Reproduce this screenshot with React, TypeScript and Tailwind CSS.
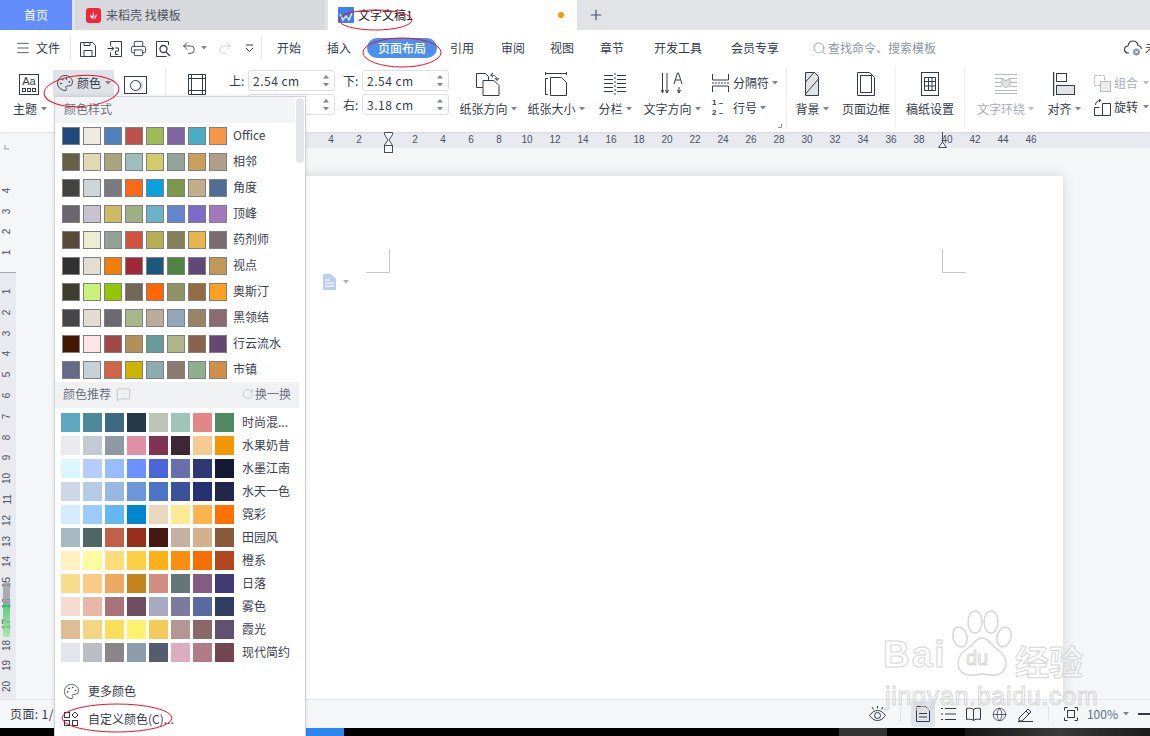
import { Printer, Undo2, Redo2, Palette, Globe, Plus, Search, Menu, RotateCw, MessageSquareMore } from "lucide-react";

const INK = "#343b48";

const styleRows = [
  { name: "Office", colors: ["#1f497d", "#eeece1", "#4f81bd", "#c0504d", "#9bbb59", "#8064a2", "#4bacc6", "#f79646"] },
  { name: "相邻", colors: ["#695f47", "#dfdab4", "#a9a57c", "#9cbebd", "#d2cb6c", "#95a39d", "#c89f5d", "#b1a089"] },
  { name: "角度", colors: ["#434342", "#ced6d9", "#797b7e", "#f96a1b", "#08a1d9", "#7c984a", "#c2ad8d", "#506e94"] },
  { name: "顶峰", colors: ["#69676d", "#c9c2d1", "#ceb966", "#9cb084", "#6bb1c9", "#6585cf", "#7e6bc9", "#a379bb"] },
  { name: "药剂师", colors: ["#564b3c", "#ecedd1", "#93a299", "#cf543f", "#b5ae53", "#848058", "#e8b54d", "#786c71"] },
  { name: "视点", colors: ["#323232", "#e3ded1", "#f07f09", "#9f2936", "#1b587c", "#4e8542", "#604878", "#c19859"] },
  { name: "奥斯汀", colors: ["#3e3d2d", "#caf278", "#94c600", "#71685a", "#ff6700", "#909465", "#956b43", "#fea022"] },
  { name: "黑领结", colors: ["#46464a", "#e3dcd0", "#6a6a70", "#a8b78a", "#bcab98", "#92a7b9", "#9b8466", "#8c6a73"] },
  { name: "行云流水", colors: ["#421800", "#ffe5e5", "#a24747", "#b29158", "#689b9a", "#b0b78a", "#8c6149", "#66476f"] },
  { name: "市镇", colors: ["#646b86", "#c5d1d7", "#d16349", "#ccb400", "#8cadae", "#8c7b70", "#8fb08c", "#d19049"] },
];

const recommendRows = [
  { name: "时尚混...", colors: ["#5ea9c2", "#4e889c", "#3d6983", "#22394a", "#bcc5b6", "#9fc4b8", "#e28786", "#508864"] },
  { name: "水果奶昔", colors: ["#e8eaed", "#c3cad1", "#8f99a4", "#df90a5", "#803353", "#3c2835", "#f6cb93", "#f39800"] },
  { name: "水墨江南", colors: ["#dcf7ff", "#b7cdff", "#97bcff", "#6c92ff", "#4a66d8", "#6870ac", "#2e3871", "#141a35"] },
  { name: "水天一色", colors: ["#cdd7e6", "#b5cbe3", "#96b8e1", "#6b97d8", "#4c75c3", "#3c519c", "#253072", "#1f274a"] },
  { name: "霓彩", colors: ["#d5ebff", "#9ccbfa", "#65b7f1", "#0085d0", "#e9d9bc", "#fee995", "#feb34f", "#ff7200"] },
  { name: "田园风", colors: ["#a2bac0", "#4e6766", "#c25f49", "#972f1b", "#461a13", "#c4b1a1", "#d5b08d", "#895a39"] },
  { name: "橙系", colors: ["#fff1c1", "#fffba1", "#fddd7a", "#fdcf47", "#feb116", "#fb8e10", "#f46e00", "#b1471f"] },
  { name: "日落", colors: ["#f7dc8c", "#fbcb85", "#eea960", "#c4831c", "#d18d80", "#647678", "#845c82", "#413b74"] },
  { name: "雾色", colors: ["#f6dbd0", "#e7b8a8", "#a8737a", "#6f4e63", "#a8aac4", "#7c7b9e", "#586ba0", "#2f3e60"] },
  { name: "霞光", colors: ["#dcbd96", "#f3d682", "#fadf5d", "#fff26f", "#f6c95b", "#b29794", "#8a6869", "#61506e"] },
  { name: "现代简约", colors: ["#e2e5ea", "#bbbdc4", "#8b8489", "#8b9cac", "#555c6d", "#dbadbe", "#b07c87", "#734651"] },
];

const rulerNumbers = [4, 2, 0, 2, 4, 6, 8, 10, 12, 14, 16, 18, 20, 22, 24, 26, 28, 30, 32, 34, 36, 38, 40, 42, 44, 46];
const lowerRuler = [1, 2, 3, 4, 5, 6, 7, 8, 9, 10, 11, 12, 13, 14, 15, 16, 17, 18, 19, 20];

const Caret = ({ color = "#7d838f" }: { color?: string }) => (
  <svg width="6" height="4" viewBox="0 0 6 4" className="shrink-0">
    <path d="M0 0h6L3 3.5z" fill={color} />
  </svg>
);

const Ico = ({ w = 24, h = 24, color = INK, children }: { w?: number; h?: number; color?: string; children: React.ReactNode }) => (
  <svg width={w} height={h} viewBox={`0 0 ${w} ${h}`} fill="none" stroke={color} strokeWidth="1" className="shrink-0">
    {children}
  </svg>
);

const Big = ({ label, width, icon, caret = true, muted = false }: { label: string; width: number; icon: React.ReactNode; caret?: boolean; muted?: boolean }) => (
  <div className="flex flex-col items-center pt-[9px] shrink-0" style={{ width }}>
    <div className="h-[24px] flex items-center justify-center">{icon}</div>
    <div className={`mt-[4px] h-[18px] flex items-center gap-[3px] whitespace-nowrap ${muted ? "text-[#a9adb5]" : ""}`}>
      {label}
      {caret && <Caret color={muted ? "#b6b9c0" : "#7d838f"} />}
    </div>
  </div>
);

const MarginInput = ({ label, value }: { label: string; value: string }) => (
  <div className="flex items-center h-[21px]">
    <span className="w-[19px]">{label}</span>
    <div className="w-[87px] h-[21px] border border-[#dcdee3] rounded-[3px] flex items-center justify-between pl-[4px] pr-[5px] tracking-[0.5px]">
      <span>{value}</span>
      <span className="flex flex-col gap-[4px]">
        <svg width="6" height="4" viewBox="0 0 6 4"><path d="M0 3.5h6L3 0z" fill="#7d838f" /></svg>
        <svg width="6" height="4" viewBox="0 0 6 4"><path d="M0 0h6L3 3.5z" fill="#7d838f" /></svg>
      </span>
    </div>
  </div>
);

const SepV = () => <div className="w-px h-[62px] mt-[4px] bg-[#eceef1] shrink-0" />;

const CustomColorIcon = () => (
  <Ico w={16} h={16}>
    <rect x="1.5" y="1.5" width="5" height="5" />
    <rect x="1.5" y="9.5" width="5" height="5" />
    <rect x="9.5" y="9.5" width="5" height="5" />
    <path d="M12 1l3 3-3 3-3-3z" />
  </Ico>
);

export default function App() {
  return (
    <div className="relative w-[1150px] h-[736px] overflow-hidden bg-white flex flex-col text-[12px] leading-none text-[#343b48] font-['Noto_Sans_CJK_SC','Noto_Sans',sans-serif]">
      {/* tab strip */}
      <div className="h-[30px] shrink-0 flex bg-[#e1e3e7]">
        <div className="w-[72px] flex items-center justify-center bg-[#628dfa] text-white">首页</div>
        <div className="ml-[3px] w-[250px] flex items-center pl-[11px] bg-[#d8d9dd] text-[#50565f]">
          <svg width="15" height="15" viewBox="0 0 15 15" className="shrink-0">
            <rect width="15" height="15" rx="3" fill="#f2263b" />
            <path d="M7.5 3c.6 2 .4 5-.6 8.5C5 10 3.5 8.500 4 6.500c1 1 1.800 1.500 2.300 1.500C7 6.500 7 4.500 7.500 3zM10.500 6c.5 2-.5 4-2.500 5.500.3-2 .9-4 2.500-5.500z" fill="#fff" />
          </svg>
          <span className="ml-[5px]">来稻壳 找模板</span>
        </div>
        <div className="ml-[3px] w-[249px] flex items-center pl-[10px] bg-white">
          <svg width="16" height="16" viewBox="0 0 16 16" className="shrink-0">
            <rect width="16" height="16" rx="1" fill="#3f7fe8" />
            <path d="M2 7l3 6 3-4 3 4 3-7" fill="none" stroke="#fff" strokeWidth="1.200" />
          </svg>
          <span className="ml-[4px] text-[#1f2329]">文字文稿1</span>
          <span className="ml-auto mr-[13px] w-[6px] h-[6px] rounded-full bg-[#eb9c12]" />
        </div>
        <div className="ml-[11px] flex items-center">
          <Plus size={16} color="#4a5468" strokeWidth={1.800} />
        </div>
      </div>

      {/* menu row */}
      <div className="h-[33px] shrink-0 flex items-center pt-[3px] whitespace-nowrap overflow-hidden [&>*]:shrink-0">
        <Menu size={16} strokeWidth={1.200} className="ml-[15px]" />
        <span className="ml-[5px]">文件</span>
        <div className="ml-[10px] w-px h-[24px] bg-[#e4e6ea]" />
        <div className="ml-[9px] w-[16px] mt-[2px]">
          <Ico w={16} h={16}>
            <path d="M.5 1.500h12l3 3v11H.5zM4 15.500V9.500h8v6M4 1.500v3h6v-3" />
          </Ico>
        </div>
        <div className="ml-[11px] w-[15px] mt-[2px]">
          <Ico w={15} h={16}>
            <path d="M3.500 4.500V.5h11v15h-11v-4M.5 7.500h6M4.500 5.500l2.500 2-2.500 2M8 7h3.500v3h-3v3.500h2.500" />
          </Ico>
        </div>
        <Printer size={17} strokeWidth={1.300} className="ml-[8px]" />
        <div className="ml-[9px] w-[15px] mt-[2px]">
          <Ico w={15} h={16}>
            <path d="M12.500 4V.5H.5v15h10" />
            <circle cx="7.500" cy="8" r="3.500" strokeWidth="1.300" />
            <path d="M10 11l4 4" strokeWidth="1.300" />
          </Ico>
        </div>
        <Undo2 size={16} strokeWidth={1.300} className="ml-[10px]" />
        <div className="ml-[4px]"><Caret /></div>
        <Redo2 size={16} strokeWidth={1.300} color="#c6c9cf" className="ml-[10px]" />
        <div className="ml-[12px] w-[9px]">
          <Ico w={9} h={9}>
            <path d="M1 1h7M1 4l3.500 3.500L8 4" />
          </Ico>
        </div>
        <div className="ml-[7px] w-px h-[24px] bg-[#e4e6ea]" />
        <span className="ml-[15px] w-[24px]">开始</span>
        <span className="ml-[26px] w-[24px]">插入</span>
        <span className="ml-[16px] w-[70px] h-[20px] rounded-full bg-[#4d8ff0] text-white flex items-center justify-center font-medium">页面布局</span>
        <span className="ml-[13px] w-[24px]">引用</span>
        <span className="ml-[27px] w-[24px]">审阅</span>
        <span className="ml-[25px] w-[24px]">视图</span>
        <span className="ml-[26px] w-[24px]">章节</span>
        <span className="ml-[30px] w-[48px]">开发工具</span>
        <span className="ml-[29px] w-[48px]">会员专享</span>
        <Search size={15} strokeWidth={1.300} color="#8f96a3" className="ml-[33px]" />
        <span className="ml-[1px] w-[108px] text-[#8f96a3]">查找命令、搜索模板</span>
        <div className="ml-[188px] w-[18px]">
          <Ico w={18} h={16}>
            <path d="M5 13H4a3.500 3.500 0 0 1 0-7c.5-3 2.500-5 5-5 2.800 0 4.500 2 5 4.500 2 .3 3.300 1.800 3.300 3.500" strokeWidth="1.200" />
            <circle cx="12.500" cy="12" r="3.500" fill="#8f96a3" stroke="none" />
            <path d="M11.200 10.700l2.600 2.600M13.800 10.700l-2.600 2.600" stroke="#fff" />
          </Ico>
        </div>
        <span className="ml-[3px]">未</span>
      </div>

      {/* ribbon */}
      <div className="h-[69px] shrink-0 flex items-start overflow-hidden shadow-[0_1px_2px_rgba(0,0,0,0.08)] z-10 bg-white whitespace-nowrap">
        <div className="ml-[13px] w-[40px] shrink-0">
          <div className="mt-[11px] ml-[6px] w-[20px] h-[21px] border border-[#343b48] flex flex-col items-center">
            <span className="text-[11px] mt-[1px] font-['Liberation_Sans',sans-serif]">Aa</span>
            <span className="flex gap-[1px] mt-[1px]">
              <i className="w-[4px] h-[4px] border border-[#343b48]" />
              <i className="w-[4px] h-[4px] border border-[#343b48]" />
              <i className="w-[4px] h-[4px] border border-[#343b48]" />
            </span>
          </div>
          <div className="mt-[7px] h-[14px] flex items-center gap-[4px]">主题<Caret /></div>
        </div>
        <div className="mt-[7px] w-[61px] h-[26px] bg-[#dfe2e6] flex items-center pl-[3px] shrink-0">
          <Palette size={18} strokeWidth={1.200} />
          <span className="ml-[3px] mr-[4px]">颜色</span>
          <Caret />
        </div>
        <div className="mt-[13px] ml-[10px] w-[23px] h-[18px] border border-[#343b48] flex items-center justify-center shrink-0">
          <span className="w-[11px] h-[11px] rounded-full border border-[#343b48] shadow-[2px_0_0_#cfd2d8]" />
        </div>
        <div className="ml-[18px] shrink-0"><SepV /></div>
        <div className="ml-[22px] mt-[11px] w-[18px] shrink-0">
          <Ico w={18} h={21}>
            <path d="M.5.5h17v20H.5zM3.500.5v20M14.500.5v20M.5 4.500h17M.5 16.500h17" />
          </Ico>
        </div>
        <div className="ml-[23px] mt-[7px] flex gap-[8px] shrink-0">
          <div className="flex flex-col gap-[3px]">
            <MarginInput label="上:" value="2.54 cm" />
            <MarginInput label="左:" value="3.18 cm" />
          </div>
          <div className="flex flex-col gap-[3px]">
            <MarginInput label="下:" value="2.54 cm" />
            <MarginInput label="右:" value="3.18 cm" />
          </div>
        </div>
        <div className="w-[7px] shrink-0" />
        <Big
          label="纸张方向"
          width={64}
          icon={
            <Ico w={26} h={24}>
              <path d="M12 15.500H1.500V1.500h9l3 3V8" />
              <path d="M8 8.500h11l5 5v10H8z" fill="#fff" />
              <path d="M16 3c4 0 6 2 6 5M20 6l2 2.500L24 6M18 1l-2.500 2L18 5" />
            </Ico>
          }
        />
        <Big
          label="纸张大小"
          width={72}
          icon={
            <Ico w={22} h={24}>
              <path d="M0 1.500h22M.5 0v3M21.500 0v3M.5 6v17M0 6.500h3M0 22.500h3" />
              <path d="M5.500 5.500h11l5 5v13h-16z" />
            </Ico>
          }
        />
        <Big
          label="分栏"
          width={46}
          icon={
            <Ico w={24} h={24}>
              <path d="M1 3.500h9M1 7.500h9M1 11.500h9M1 15.500h9M1 19.500h9M14 3.500h9M14 7.500h9M14 11.500h9M14 15.500h9M14 19.500h9" />
              <path d="M12 1v22" strokeDasharray="2 2" />
            </Ico>
          }
        />
        <Big
          label="文字方向"
          width={68}
          icon={
            <Ico w={22} h={24}>
              <path d="M1.500 1v20M.5 18l1 3 1-3M6 1v20M4.500 18l1.500 3 1.500-3M18 15v6M16.500 18l1.500 3 1.500-3" />
              <path d="M13 12l3.500-11h1L21 12M14.500 8h5" />
            </Ico>
          }
        />
        <div className="w-[80px] pl-[6px] relative shrink-0">
          <div className="mt-[11px] h-[18px] flex items-center">
            <Ico w={17} h={18}>
              <path d="M.5 0v6h16V0M.5 18v-6h16v6" />
              <path d="M0 9h17" strokeDasharray="2 1" />
            </Ico>
            <span className="ml-[4px] mr-[3px]">分隔符</span>
            <Caret />
          </div>
          <div className="mt-[7px] h-[18px] flex items-center">
            <div className="w-[17px] h-[18px] flex flex-col text-[8px] font-['Liberation_Sans',sans-serif] font-bold">
              <span>1 –</span>
              <span className="mt-[2px]">2 –</span>
            </div>
            <span className="ml-[4px] mr-[3px]">行号</span>
            <Caret />
          </div>
          <span className="absolute left-[72px] top-[61px] w-[4px] h-[4px] border-r border-b border-[#8d929c]" />
        </div>
        <SepV />
        <Big
          label="背景"
          width={50}
          icon={
            <Ico w={14} h={24}>
              <rect x="0" y="0" width="14" height="24" fill="#e1e3e6" stroke="none" />
              <path d="M.5 23.500V.5h9l4 4v19zM.5 10L9 .5M.5 22L13.500 7" />
            </Ico>
          }
          caret
        />
        <Big
          label="页面边框"
          width={58}
          caret={false}
          icon={
            <Ico w={18} h={24}>
              <path d="M.5.5h12l5 5v18H.5z" />
              <rect x="3.500" y="3.500" width="11" height="17" />
            </Ico>
          }
        />
        <SepV />
        <Big
          label="稿纸设置"
          width={68}
          caret={false}
          icon={
            <Ico w={18} h={24}>
              <rect x=".5" y=".5" width="17" height="23" />
              <path d="M3.500 5.500h11v13h-11zM3.500 9.500h11M3.500 14h11M7.500 5.500v13M11 5.500v13" />
            </Ico>
          }
        />
        <SepV />
        <Big
          label="文字环绕"
          width={81}
          muted
          icon={
            <Ico w={22} h={20} color="#b6b9c0">
              <path d="M0 .5h22M0 4.500h7M15 4.500h7M0 8.500h7M15 8.500h7M0 12.500h7M15 12.500h7M0 16.500h22M0 19.500h22" />
              <path d="M7 4l4 3 4-3v7l-4 3-4-3z" fill="#e1e3e6" />
            </Ico>
          }
        />
        <Big
          label="对齐"
          width={36}
          icon={
            <Ico w={22} h={24}>
              <path d="M.5 0v24" strokeWidth="1.500" />
              <rect x="3.500" y="1.500" width="10" height="8" />
              <rect x="3.500" y="13.500" width="18" height="9" fill="#e1e3e6" />
            </Ico>
          }
        />
        <div className="pl-[12px] shrink-0">
          <div className="mt-[11px] h-[18px] flex items-center text-[#a9adb5]">
            <Ico w={17} h={17} color="#b6b9c0">
              <path d="M.5.5h10v10H.5z" strokeDasharray="3 1" />
              <rect x="6.500" y="6.500" width="10" height="10" fill="#ecedef" />
            </Ico>
            <span className="ml-[3px] mr-[5px]">组合</span>
            <Caret color="#b6b9c0" />
          </div>
          <div className="mt-[6px] h-[18px] flex items-center">
            <Ico w={17} h={17}>
              <path d="M.5 16.500V8.500h5M5.500 16.500h-5M8.500 16.500V4.500h8v12zM.5 16.500h16" />
              <path d="M1.500 6c0-3 2-4.500 5-4.500M5 0l2 1.500L5 3" />
            </Ico>
            <span className="ml-[3px] mr-[5px]">旋转</span>
            <Caret />
          </div>
        </div>
      </div>

      {/* horizontal ruler */}
      <div className="h-[16px] shrink-0 flex bg-[#f5f6f8] relative">
        <div className="w-[54px] shrink-0 relative">
          <span className="absolute left-[4px] top-[13px] w-[5px] h-[5px] border-l-2 border-b-2 border-[#c4c7cd] z-10" />
        </div>
        <div className="flex-1 bg-[#e8eaef] flex pl-[263px] items-center text-[10px] text-[#4b5261] font-['Liberation_Sans',sans-serif]">
          {rulerNumbers.map((n, i) => (
            <span key={i} className="w-[28px] shrink-0 text-center">{n === 0 ? "" : n}</span>
          ))}
        </div>
        <svg width="10" height="22" viewBox="0 0 10 22" className="absolute left-[384px] top-0 z-10" fill="#fff" stroke="#3d4a63">
          <path d="M.5.500h8v2L5 8l3.500 5.500H.5V13L4 8 .5 2.500z" />
          <rect x=".5" y="13.500" width="8" height="7" />
        </svg>
        <svg width="10" height="17" viewBox="0 0 10 17" className="absolute left-[938px] top-0 z-10" fill="#fff" stroke="#3d4a63">
          <path d="M4.500 0v10" />
          <path d="M4.500 10L8.500 15.500H.5z" />
        </svg>
      </div>

      {/* canvas */}
      <div className="flex-1 min-h-0 flex bg-[#f5f6f8] overflow-hidden">
        <div className="w-[16px] shrink-0 flex flex-col text-[10px] text-[#4b5261] font-['Liberation_Sans',sans-serif]">
          <div className="h-[124px] flex flex-col justify-end pb-[9px] items-center">
            {[4, 3, 2, 1].map((n) => (
              <span key={n} className="h-[20.8px] flex items-center -rotate-90">{n}</span>
            ))}
          </div>
          <div className="relative flex-1 bg-[#e8eaef] border-t border-[#a7abb5] pt-[8px] flex flex-col items-center">
            {lowerRuler.map((n) => (
              <span key={n} className="h-[20.8px] shrink-0 flex items-center -rotate-90">{n}</span>
            ))}
            <div className="absolute left-[3px] top-[309px] w-[7px] h-[55px] rounded-[2px] overflow-hidden flex flex-col opacity-80">
              <div className="h-[22px] bg-[#9a9ea3]" />
              <div className="h-[33px] bg-gradient-to-b from-[#1fc768] to-[#9fe39a]" />
            </div>
          </div>
        </div>
        <div className="relative ml-[264px] mt-[28px] w-[783px] h-[600px] bg-white shadow-[0_0_12px_rgba(0,0,0,0.14)]">
          <span className="absolute left-[86px] top-[73px] w-[24px] h-[24px] border-r border-b border-[#c4c6ca]" />
          <span className="absolute left-[662px] top-[73px] w-[24px] h-[24px] border-l border-b border-[#c4c6ca]" />
          <div className="absolute left-[43px] top-[98px] flex items-center gap-[7px]">
            <svg width="13" height="16" viewBox="0 0 13 16">
              <path d="M0 0h8l5 5v11H0z" fill="#bcd0ec" />
              <path d="M2 6h5M2 9h9M2 12h9" stroke="#fff" strokeWidth="1" />
            </svg>
            <Caret color="#a9adb5" />
          </div>
        </div>
      </div>

      {/* status bar */}
      <div className="h-[29px] shrink-0 flex items-center bg-[#f5f6f8] border-t border-[#e3e4ea] whitespace-nowrap z-10">
        <span className="ml-[10px] tracking-[0.4px]">页面: 1/1</span>
        <div className="ml-auto w-[285px] shrink-0 flex items-center h-full overflow-hidden">
          <div className="w-[26px] flex justify-center">
            <Ico w={17} h={16}>
              <path d="M.5 9.500C3 6 5.500 4.500 8.500 4.500s5.500 1.500 8 5c-2.500 3.500-5 5-8 5s-5.500-1.500-8-5z" />
              <circle cx="8.500" cy="9.500" r="3" />
              <path d="M8.500 0v2.500M3 1l1.500 2.500M14 1l-1.500 2.500" />
            </Ico>
          </div>
          <div className="w-[20px] flex justify-center"><div className="w-px h-[14px] bg-[#dfe1e6]" /></div>
          <div className="w-[24px] h-[26px] bg-[#dfe3ea] rounded-[2px] flex items-center justify-center">
            <Ico w={14} h={16}>
              <path d="M.5.5h9l4 4v11H.5zM3 7.500h8M3 11h8" />
            </Ico>
          </div>
          <div className="ml-[2px] w-[24px] flex justify-center">
            <Ico w={15} h={14}>
              <path d="M4 1.500h11M4 7h11M4 12.500h11M0 1.500h2M0 7h2M0 12.500h2" />
            </Ico>
          </div>
          <div className="ml-[1px] w-[24px] flex justify-center">
            <Ico w={15} h={15}>
              <path d="M.5 1.500C3 1 6 1 7.500 2.500 9 1 12 1 14.500 1.500v11c-2.500-.5-5.500-.5-7 1-1.500-1.500-4.500-1.500-7-1zM7.500 2.500v11" />
            </Ico>
          </div>
          <div className="ml-[2px] w-[24px] flex justify-center">
            <Globe size={15} strokeWidth={1.200} />
          </div>
          <div className="ml-[3px] w-[24px] flex justify-center">
            <Ico w={16} h={15}>
              <path d="M1 11L10 2l3 3-9 9H1zM8 4l3 3M0 14.500h15" />
            </Ico>
          </div>
          <div className="w-[20px] flex justify-center"><div className="w-px h-[14px] bg-[#dfe1e6]" /></div>
          <div className="ml-[1px] w-[24px] flex justify-center">
            <Ico w={14} h={14}>
              <path d="M.5 3.500v-3h3M10.500.5h3v3M13.500 10.500v3h-3M3.500 13.500h-3v-3" />
              <rect x="3.500" y="3.500" width="7" height="7" />
            </Ico>
          </div>
          <span className="ml-[4px] text-[#58708f]">100%</span>
          <span className="ml-[5px]"><Caret /></span>
          <span className="ml-[9px] w-[12px] h-[2px] bg-[#343b48] shrink-0" />
        </div>
      </div>

      {/* black strip below the window */}
      <div className="h-[8px] shrink-0 bg-black flex">
        <div className="ml-[300px] w-[44px] bg-[#2e86f0]" />
        <div className="ml-[495px] w-[48px] bg-[#333333]" />
        <div className="ml-[78px] flex-1 bg-gradient-to-r from-[#161616] via-[#3a3a3a] to-[#1c1c1c]" />
      </div>

      {/* colour dropdown */}
      <div className="absolute left-[54px] top-[96px] w-[252px] h-[640px] bg-white border-x border-t border-[#cfd2d8] z-20 shadow-[0_0_4px_rgba(0,0,0,0.1)]">
        <div className="h-[26px] w-[240px] bg-[#f3f4f6] flex items-center pl-[9px] pb-[2px] text-[#6b7280]">颜色样式</div>
        <div className="absolute left-[241px] top-[1px] w-[8px] h-[65px] rounded-full bg-[#e4e6ea]" />
        {styleRows.map((row) => (
          <div key={row.name} className="h-[26px] flex items-start pl-[7px] pt-[4px]">
            {row.colors.map((c) => (
              <span key={c} className="w-[18px] h-[18px] mr-[3px] border border-[#808080]" style={{ backgroundColor: c }} />
            ))}
            <span className="ml-[3px] h-[18px] pb-[2px] flex items-center text-[#3a404c]">{row.name}</span>
          </div>
        ))}
        <div className="-mt-px h-[26px] w-[244px] bg-[#f0f1f3] flex items-center pl-[8px] pb-[2px] text-[#6b7280]">
          颜色推荐
          <MessageSquareMore size={15} strokeWidth={1} color="#a6abb3" className="ml-[5px]" />
          <RotateCw size={12} strokeWidth={1.200} color="#b0b4bb" className="ml-auto" />
          <span className="ml-[1px] mr-[8px]">换一换</span>
        </div>
        <div className="pt-[5px]">
          {recommendRows.map((row) => (
            <div key={row.name} className="h-[23px] flex items-start pl-[6px]">
              {row.colors.map((c) => (
                <span key={c} className="w-[19px] h-[19px] mr-[3px]" style={{ backgroundColor: c }} />
              ))}
              <span className="ml-[5px] h-[19px] pb-[2px] flex items-center text-[#3a404c]">{row.name}</span>
            </div>
          ))}
        </div>
        <div className="mt-[11px] h-[28px] flex items-center pl-[8px]">
          <Palette size={17} strokeWidth={1.100} />
          <span className="ml-[8px]">更多颜色</span>
        </div>
        <div className="h-[27px] flex items-center pl-[8px]">
          <CustomColorIcon />
          <span className="ml-[9px]">自定义颜色(C)...</span>
        </div>
      </div>

      {/* watermark */}
      <div className="absolute left-[883px] top-[610px] w-[205px] h-[100px] z-30 pointer-events-none font-['Liberation_Sans',sans-serif] text-transparent [-webkit-text-stroke:1px_#d6d6d6]">
        <span className="absolute left-0 top-[26px] text-[37px] leading-none font-bold tracking-[2px]">Bai</span>
        <svg width="62" height="68" viewBox="0 0 62 68" className="absolute left-[68px] top-0" fill="none" stroke="#d6d6d6" strokeWidth="1.500">
          <ellipse cx="9" cy="27" rx="7" ry="10" transform="rotate(-15 9 27)" />
          <ellipse cx="24" cy="12" rx="7" ry="11" />
          <ellipse cx="40" cy="12" rx="7" ry="11" />
          <ellipse cx="53" cy="27" rx="7" ry="10" transform="rotate(15 53 27)" />
          <path d="M31 28c-6 0-9 7-15 11-6 4-9 8-9 14 0 8 6 13 14 12 4 0 7-1 10-1s6 1 10 1c8 1 14-4 14-12 0-6-3-10-9-14-6-4-9-11-15-11z" />
        </svg>
        <span className="absolute left-[83px] top-[38px] text-[20px] leading-none">du</span>
        <span className="absolute left-[132px] top-[34px] text-[34px] leading-none font-bold font-['Noto_Sans_CJK_SC',sans-serif]">经验</span>
        <span className="absolute left-[2px] top-[74px] text-[25px] leading-none tracking-[0.7px]">jingyan.baidu.com</span>
      </div>

      {/* hand-drawn red marks */}
      <svg width="1150" height="736" viewBox="0 0 1150 736" fill="none" stroke="#e3142d" strokeWidth="1" className="absolute left-0 top-0 z-40 pointer-events-none">
        <ellipse cx="375.500" cy="20" rx="36.500" ry="10" />
        <ellipse cx="402" cy="52.500" rx="39" ry="14.500" />
        <ellipse cx="81.500" cy="91" rx="37.500" ry="15.500" transform="rotate(-4 81.500 91)" />
        <ellipse cx="117" cy="718" rx="55" ry="14" />
      </svg>
    </div>
  );
}
